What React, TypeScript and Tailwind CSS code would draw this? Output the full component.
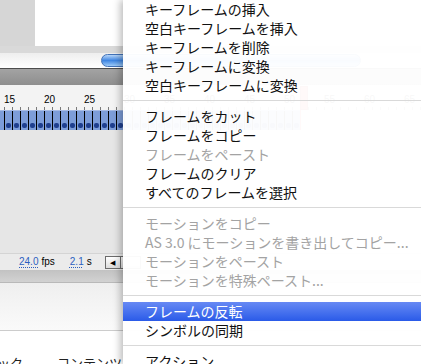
import React from 'react';

type MenuEntry = { label: string; disabled?: boolean; active?: boolean } | 'sep';

const menuEntries: MenuEntry[] = [
  { label: 'キーフレームの挿入' },
  { label: '空白キーフレームを挿入' },
  { label: 'キーフレームを削除' },
  { label: 'キーフレームに変換' },
  { label: '空白キーフレームに変換' },
  'sep',
  { label: 'フレームをカット' },
  { label: 'フレームをコピー' },
  { label: 'フレームをペースト', disabled: true },
  { label: 'フレームのクリア' },
  { label: 'すべてのフレームを選択' },
  'sep',
  { label: 'モーションをコピー', disabled: true },
  { label: 'AS 3.0 にモーションを書き出してコピー...', disabled: true },
  { label: 'モーションをペースト', disabled: true },
  { label: 'モーションを特殊ペースト...', disabled: true },
  'sep',
  { label: 'フレームの反転', active: true },
  { label: 'シンボルの同期' },
  'sep',
  { label: 'アクション' },
];

const rulerLabels = [15, 20, 25, 30, 35, 40, 45, 50, 55, 60, 65];
const ticks = Array.from({ length: 53 }, (_, i) => i);
const frames = Array.from({ length: 37 }, (_, i) => i);

const ContextMenu: React.FC = () => (
  <div className="absolute top-0 bottom-0 left-[123px] right-0 bg-white/[0.97] shadow-[-3px_0_7px_rgba(0,0,0,0.25)] font-['Noto_Sans_CJK_JP',sans-serif] text-[14px]">
    {menuEntries.map((entry, i) =>
      entry === 'sep' ? (
        <div key={i} className="h-[12px] pt-[5px]">
          <div className="h-px bg-[#d9d9d9]" />
        </div>
      ) : (
        <div
          key={i}
          className={`h-[19px] leading-[19px] pl-[22px] whitespace-nowrap ${
            entry.active
              ? 'bg-gradient-to-b from-[#6789f4] to-[#2a5ae8] text-white'
              : entry.disabled
              ? 'text-[#a3a3a3]'
              : 'text-[#111]'
          }`}
        >
          {entry.label}
        </div>
      )
    )}
  </div>
);

export default function App() {
  return (
    <div className="relative w-[421px] h-[364px] overflow-hidden bg-white font-['Liberation_Sans',Arial,sans-serif]">
      <div className="flex flex-col">
        {/* stage */}
        <div className="flex h-[46px]">
          <div className="w-[35px] bg-[#d6d6d6]" />
          <div className="flex-1 bg-white" />
        </div>
        <div className="h-[7px] bg-[#d9d9d9]" />

        {/* horizontal scrollbar */}
        <div className="relative h-[16px] border-b border-[#4d4d4d] bg-gradient-to-b from-[#eeeeee] to-white">
          <div className="absolute left-[101px] top-[1px] h-[13px] w-[260px] rounded-full border border-[#4272b8] bg-gradient-to-b from-[#b6d5f8] via-[#3f86e2] to-[#9ccaf7]" />
        </div>

        {/* timeline header bar */}
        <div className="h-[16px] bg-gradient-to-b from-[#a3a3a3] to-[#8e8e8e]" />

        {/* ruler */}
        <div className="relative h-[25px] bg-[#f3f3f3] pt-[10px]">
          <div className="flex pl-[4px] h-[10px] text-[10px] leading-none text-black">
            {rulerLabels.map((n) => (
              <div key={n} className="w-[40px] shrink-0">
                {n}
              </div>
            ))}
          </div>
          <div className="flex pl-[4px] mt-[2px]">
            {ticks.map((t) => (
              <div key={t} className="w-[8px] h-[3px] shrink-0 border-l border-[#7a7a7a]" />
            ))}
          </div>
          <div className="absolute left-[300px] top-[1px] w-[8px] h-[24px] bg-[#e8483c] border border-[#b52a20]" />
        </div>

        {/* frames */}
        <div className="flex h-[20px] bg-white">
          <div className="flex w-[300px] bg-[#7d9dd9] border-t border-[#a6bbe6]">
            <div className="w-[4px] shrink-0" />
            {frames.map((f) => (
              <div
                key={f}
                className="w-[8px] shrink-0 border-l border-black flex items-end justify-center pb-[2px]"
              >
                <div className="w-[5px] h-[5px] rounded-[2px] bg-[#1f3f8f]" />
              </div>
            ))}
          </div>
          <div className="w-px bg-[#e8483c]" />
        </div>

        {/* empty layers area */}
        <div className="h-[123px] bg-[#e6e6e6]" />

        {/* status bar */}
        <div className="flex items-center h-[17px] pl-[19px] bg-[#ebebeb] border-t border-[#d4d4d4] text-[10px] leading-none text-black">
          <span className="text-[#2d5fc0] underline decoration-dotted underline-offset-2">24.0</span>
          <span className="ml-[3px]">fps</span>
          <span className="ml-[15px] text-[#2d5fc0] underline decoration-dotted underline-offset-2">2.1</span>
          <span className="ml-[3px]">s</span>
          <div className="ml-[13px] flex h-[13px]">
            <div className="flex items-center justify-center w-[16px] border border-[#6b6b6b] bg-gradient-to-b from-white to-[#dcdcdc] text-[7px]">
              ◀
            </div>
            <div className="w-[20px] border border-l-0 border-[#6b6b6b] bg-gradient-to-b from-white to-[#dcdcdc]" />
          </div>
        </div>

        <div className="h-[13px] bg-gradient-to-b from-[#c2c2c2] to-[#d2d2d2] border-b border-[#b9b9b9]" />
        <div className="h-[48px] bg-gradient-to-b from-[#efefef] to-[#fafafa] border-b border-[#cccccc]" />

        {/* panel tabs, cut off by the window edge */}
        <div className="flex pt-[25px] text-[13px] leading-none text-[#222] font-['Noto_Sans_CJK_JP',sans-serif]">
          <span className="-ml-[3px]">ック</span>
          <span className="ml-[34px]">コンテンツ</span>
        </div>
      </div>

      <ContextMenu />
    </div>
  );
}
